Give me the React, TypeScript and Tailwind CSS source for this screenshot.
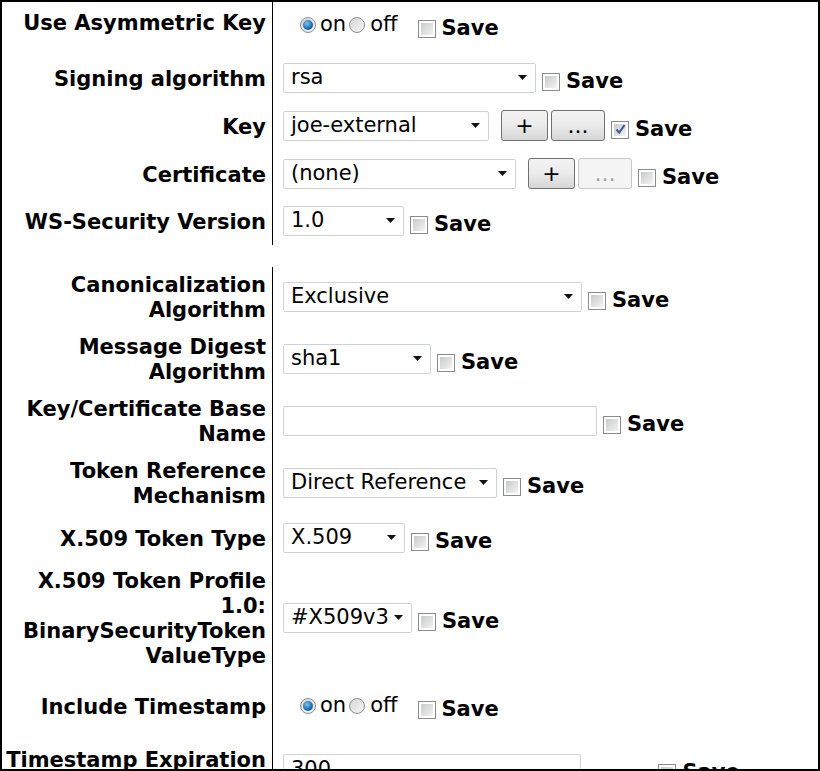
import type { ReactNode } from 'react';

function Checkbox({ checked = false }: { checked?: boolean }) {
  return (
    <span className="w-[18px] h-[18px] shrink-0 border border-[#8a8b8c] bg-white p-[2px] flex">
      <span className="flex-1 bg-gradient-to-br from-[#c9cacb] to-[#f3f3f3] flex items-center justify-center">
        {checked && (
          <svg width="11" height="11" viewBox="0 0 11 11">
            <path d="M1.5 5.5 L4.2 8.7 L9.5 1.2" fill="none" stroke="#3c5a9e" strokeWidth="2" />
          </svg>
        )}
      </span>
    </span>
  );
}

function SaveBox({ checked = false }: { checked?: boolean }) {
  return (
    <div className="flex items-center gap-[6px] ml-[6px] mt-[8px]">
      <Checkbox checked={checked} />
      <span className="font-bold text-[21px] leading-[25px]">Save</span>
    </div>
  );
}

function Radio({ checked = false }: { checked?: boolean }) {
  return (
    <span className="w-[16px] h-[16px] rounded-full border border-[#8e8f8f] bg-gradient-to-br from-[#d4d4d4] to-[#f8f8f8] flex items-center justify-center">
      {checked && (
        <span className="w-[10px] h-[10px] rounded-full bg-[radial-gradient(circle_at_40%_35%,#7cc4f0,#1a69ad_60%,#0d4a80)]" />
      )}
    </span>
  );
}

function OnOff() {
  return (
    <div className="flex items-center pl-[17px]">
      <Radio checked />
      <span className="ml-[4px] text-[21px] leading-[25px]">on</span>
      <span className="ml-[3px]">
        <Radio />
      </span>
      <span className="ml-[5px] text-[21px] leading-[25px]">off</span>
      <div className="ml-[14px]">
        <SaveBox />
      </div>
    </div>
  );
}

function Select({ value, w }: { value: string; w: string }) {
  return (
    <div className={`${w} h-[30px] shrink-0 border border-[#cfd3d8] rounded-[2px] bg-white flex items-center justify-between pl-[7px] pr-[8px]`}>
      <span className="text-[21px] leading-[25px] whitespace-nowrap">{value}</span>
      <svg width="9" height="5" viewBox="0 0 9 5" className="shrink-0 ml-[4px]">
        <path d="M0 0 H9 L4.5 5 Z" fill="#111" />
      </svg>
    </div>
  );
}

function TextBox({ w, value = '' }: { w: string; value?: string }) {
  return (
    <div className={`${w} h-[30px] shrink-0 border border-[#cfd3d8] rounded-[2px] bg-white flex items-center pl-[7px]`}>
      <span className="text-[21px] leading-[25px]">{value}</span>
    </div>
  );
}

function Btn({ children, w, disabled = false }: { children: ReactNode; w: string; disabled?: boolean }) {
  return (
    <div
      className={
        disabled
          ? `${w} h-[31px] shrink-0 rounded-[3px] border border-[#c5c8cb] bg-[#f4f4f4] text-[#9ea3a8] flex items-center justify-center text-[22px]`
          : `${w} h-[31px] shrink-0 rounded-[3px] border border-[#707070] bg-gradient-to-b from-[#f2f2f2] via-[#ebebeb] to-[#d6d6d6] text-black flex items-center justify-center text-[22px]`
      }
    >
      {children}
    </div>
  );
}

function Row({ label, h, top = false, children }: { label: ReactNode; h: string; top?: boolean; children: ReactNode }) {
  return (
    <div className={`flex ${h}`}>
      <div
        className={`w-[271px] shrink-0 border-r border-black pr-[6px] flex justify-end text-right font-bold text-[21px] leading-[25px] whitespace-nowrap ${
          top ? 'items-start pt-[9px]' : 'items-center'
        }`}
      >
        <div>{label}</div>
      </div>
      <div className={`flex pl-[10px] ${top ? 'items-start pt-[6px]' : 'items-center pb-[3px]'}`}>{children}</div>
    </div>
  );
}

export default function App() {
  return (
    <div className="w-[820px] h-[771px] border-2 border-black overflow-hidden bg-white text-black font-['DejaVu_Sans',Verdana,sans-serif]">
      <Row label="Use Asymmetric Key" h="h-[53px]" top>
        <OnOff />
      </Row>
      <Row label="Signing algorithm" h="h-[48px]">
        <Select value="rsa" w="w-[253px]" />
        <SaveBox />
      </Row>
      <Row label="Key" h="h-[48px]">
        <Select value="joe-external" w="w-[206px]" />
        <div className="flex gap-[3px] ml-[12px]">
          <Btn w="w-[47px]">+</Btn>
          <Btn w="w-[54px]">...</Btn>
        </div>
        <SaveBox checked />
      </Row>
      <Row label="Certificate" h="h-[48px]">
        <Select value="(none)" w="w-[233px]" />
        <div className="flex gap-[3px] ml-[12px]">
          <Btn w="w-[47px]">+</Btn>
          <Btn w="w-[54px]" disabled>
            ...
          </Btn>
        </div>
        <SaveBox />
      </Row>
      <Row label="WS-Security Version" h="h-[46px]">
        <Select value="1.0" w="w-[121px]" />
        <SaveBox />
      </Row>

      <div className="h-[22px]" />

      <Row label={<>Canonicalization<br />Algorithm</>} h="h-[62px]">
        <Select value="Exclusive" w="w-[299px]" />
        <SaveBox />
      </Row>
      <Row label={<>Message Digest<br />Algorithm</>} h="h-[62px]">
        <Select value="sha1" w="w-[148px]" />
        <SaveBox />
      </Row>
      <Row label={<>Key/Certificate Base<br />Name</>} h="h-[62px]">
        <TextBox w="w-[314px]" />
        <SaveBox />
      </Row>
      <Row label={<>Token Reference<br />Mechanism</>} h="h-[62px]">
        <Select value="Direct Reference" w="w-[214px]" />
        <SaveBox />
      </Row>
      <Row label="X.509 Token Type" h="h-[48px]">
        <Select value="X.509" w="w-[122px]" />
        <SaveBox />
      </Row>
      <Row label={<>X.509 Token Profile<br />1.0:<br />BinarySecurityToken<br />ValueType</>} h="h-[112px]">
        <Select value="#X509v3" w="w-[129px]" />
        <SaveBox />
      </Row>
      <Row label="Include Timestamp" h="h-[64px]">
        <OnOff />
      </Row>
      <Row label="Timestamp Expiration" h="h-[48px]" top>
        <div className="flex items-start pt-[9px]">
          <TextBox w="w-[298px]" value="300" />
          <span className="ml-[28px] mt-[9px] text-[21px] leading-[25px]">sec</span>
          <div className="ml-[8px] -mt-[2px]">
            <SaveBox />
          </div>
        </div>
      </Row>
    </div>
  );
}
